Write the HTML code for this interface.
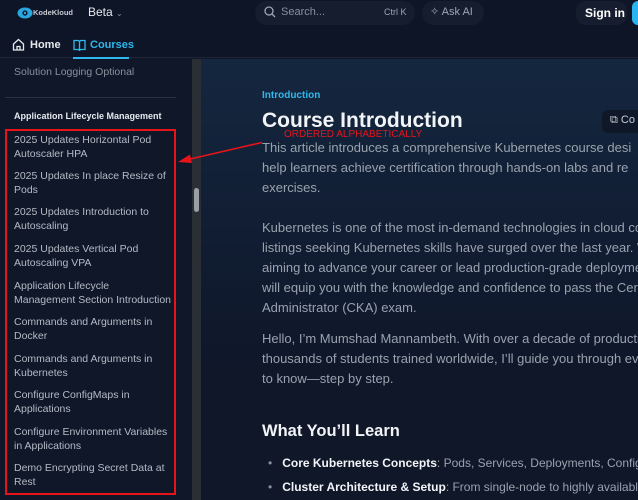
<!DOCTYPE html>
<html><head><meta charset="utf-8"><style>
*{margin:0;padding:0;box-sizing:border-box}
body{width:638px;height:500px;overflow:hidden;background:#0f1729;font-family:"Liberation Sans",sans-serif;color:#e6e9ee}
#w{position:relative;width:638px;height:500px;overflow:hidden}
.a{position:absolute;white-space:nowrap}
#top{position:absolute;left:0;top:0;width:638px;height:58px;background:#0e1526;border-bottom:1px solid #1d2536}
#side{position:absolute;left:0;top:59px;width:192px;height:441px;background:#0f1729}
#sb{position:absolute;left:192px;top:59px;width:9px;height:441px;background:#2a2e35}
#thumb{position:absolute;left:194px;top:188px;width:5px;height:24px;background:#9a9ea6;border-radius:3px}
#main{position:absolute;left:201px;top:59px;width:437px;height:441px;background:linear-gradient(180deg,#14273f 0%,#111d33 40%,#0f1729 70%)}
.it{position:absolute;left:14px;font-size:10.5px;line-height:13.5px;color:#b4bac4;width:165px}
.p{position:absolute;left:262px;font-size:13px;line-height:20px;color:#9aa2ae;white-space:nowrap}
</style></head><body><div id="w">
<div id="top"></div>
<div id="main"></div>
<div id="side"></div>
<div id="sb"></div><div id="thumb"></div>

<svg class="a" style="left:17px;top:7px" width="16" height="12" viewBox="0 0 16 12"><ellipse cx="8" cy="6" rx="7.5" ry="5.5" fill="#29a8e0"/><circle cx="8" cy="6" r="2.6" fill="#0e1526"/><circle cx="8" cy="6" r="1.2" fill="#29a8e0"/></svg>
<div class="a" style="left:33px;top:8px;font-size:7.5px;font-weight:bold;color:#c8ccd4">KodeKloud</div>
<div class="a" style="left:88px;top:5px;font-size:12px;color:#e6e9ee">Beta <span style="font-size:8px;color:#8890a0">&#8964;</span></div>
<div class="a" style="left:255px;top:1px;width:160px;height:24px;border-radius:12px;background:#151d2e"></div>
<svg class="a" style="left:264px;top:6px" width="12" height="12" viewBox="0 0 12 12" fill="none" stroke="#a0a6b2" stroke-width="1.3"><circle cx="5" cy="5" r="4"/><path d="M8 8l3 3"/></svg>
<div class="a" style="left:281px;top:6px;font-size:11px;color:#8890a0">Search...</div>
<div class="a" style="left:384px;top:7px;font-size:9px;color:#a0a6b2">Ctrl K</div>
<div class="a" style="left:422px;top:1px;width:62px;height:24px;border-radius:12px;background:#151d2e"></div>
<div class="a" style="left:430px;top:5px;font-size:11px;color:#a0a6b2">&#10023; Ask AI</div>
<div class="a" style="left:576px;top:1px;width:51px;height:24px;border-radius:10px;background:#151d2e"></div>
<div class="a" style="left:585px;top:6px;font-size:12px;font-weight:bold;color:#fff">Sign in</div>
<div class="a" style="left:632px;top:1px;width:6px;height:24px;border-radius:8px 0 0 8px;background:#29b6f0"></div>

<svg class="a" style="left:12px;top:38px" width="13" height="13" viewBox="0 0 13 13" fill="none" stroke="#e6e9ee" stroke-width="1.3"><path d="M1.5 6L6.5 1.5 11.5 6V12H1.5Z"/><path d="M5 12V8.5h3V12"/></svg>
<div class="a" style="left:30px;top:39px;font-size:11px;font-weight:bold;color:#e6e9ee">Home</div>
<svg class="a" style="left:73px;top:39px" width="13" height="12" viewBox="0 0 13 12" fill="none" stroke="#2fb8ee" stroke-width="1.3"><path d="M1 1.5h4.5l1 1 1-1H12v9H7.5l-1 1-1-1H1Z"/><path d="M6.5 2.5v8.5"/></svg>
<div class="a" style="left:90px;top:39px;font-size:11px;font-weight:bold;color:#2fb8ee">Courses</div>
<div class="a" style="left:73px;top:57px;width:56px;height:2px;background:#2fb8ee"></div>

<div class="a" style="left:14px;top:66px;font-size:10.5px;color:#8a909c">Solution Logging Optional</div>
<div class="a" style="left:5px;top:97px;width:171px;height:1px;background:#2a3242"></div>
<div class="a" style="left:14px;top:111px;font-size:9px;font-weight:bold;color:#e6e9ee">Application Lifecycle Management</div>
<div class="it" style="top:134px">2025 Updates Horizontal Pod<br>Autoscaler HPA</div>
<div class="it" style="top:170px">2025 Updates In place Resize of<br>Pods</div>
<div class="it" style="top:206px">2025 Updates Introduction to<br>Autoscaling</div>
<div class="it" style="top:243px">2025 Updates Vertical Pod<br>Autoscaling VPA</div>
<div class="it" style="top:280px">Application Lifecycle<br>Management Section Introduction</div>
<div class="it" style="top:316px">Commands and Arguments in<br>Docker</div>
<div class="it" style="top:353px">Commands and Arguments in<br>Kubernetes</div>
<div class="it" style="top:389px">Configure ConfigMaps in<br>Applications</div>
<div class="it" style="top:426px">Configure Environment Variables<br>in Applications</div>
<div class="it" style="top:462px">Demo Encrypting Secret Data at<br>Rest</div>
<div class="a" style="left:5px;top:129px;width:171px;height:366px;border:2px solid #e8141a"></div>

<div class="a" style="left:262px;top:90px;font-size:10px;font-weight:bold;color:#2fb8ee">Introduction</div>
<div class="a" style="left:262px;top:109px;font-size:21px;font-weight:bold;color:#f2f4f7">Course Introduction</div>
<div class="a" style="left:602px;top:110px;width:36px;height:23px;border-radius:6px 0 0 6px;background:#0f1828"></div>
<div class="a" style="left:610px;top:114px;font-size:11px;color:#c8ccd4">&#10697; Co</div>
<div class="a" style="left:284px;top:129px;font-size:10px;color:#e8141a">ORDERED ALPHABETICALLY</div>
<svg class="a" style="left:0;top:0" width="638" height="500"><path d="M262 142.5L188 159.5" stroke="#e8141a" stroke-width="1.6"/><path d="M178 162L190 154.5 192 163Z" fill="#e8141a"/></svg>

<div class="p" style="top:138px">This article introduces a comprehensive Kubernetes course desi<br>help learners achieve certification through hands-on labs and re<br>exercises.</div>
<div class="p" style="top:218px">Kubernetes is one of the most in-demand technologies in cloud computi<br>listings seeking Kubernetes skills have surged over the last year. Whethe<br>aiming to advance your career or lead production-grade deployments, th<br>will equip you with the knowledge and confidence to pass the Certified K<br>Administrator (CKA) exam.</div>
<div class="p" style="top:329px">Hello, I’m Mumshad Mannambeth. With over a decade of production exp<br>thousands of students trained worldwide, I’ll guide you through everythin<br>to know—step by step.</div>
<div class="a" style="left:262px;top:422px;font-size:16.5px;font-weight:bold;color:#f2f4f7">What You’ll Learn</div>
<div class="a" style="left:268px;top:456px;font-size:12px;color:#9aa2ae"><span style="color:#8890a0">•</span>&nbsp;&nbsp;&nbsp;<b style="color:#f2f4f7">Core Kubernetes Concepts</b>: Pods, Services, Deployments, ConfigM</div>
<div class="a" style="left:268px;top:480px;font-size:12px;color:#9aa2ae"><span style="color:#8890a0">•</span>&nbsp;&nbsp;&nbsp;<b style="color:#f2f4f7">Cluster Architecture &amp; Setup</b>: From single-node to highly available c</div>
</div></body></html>
